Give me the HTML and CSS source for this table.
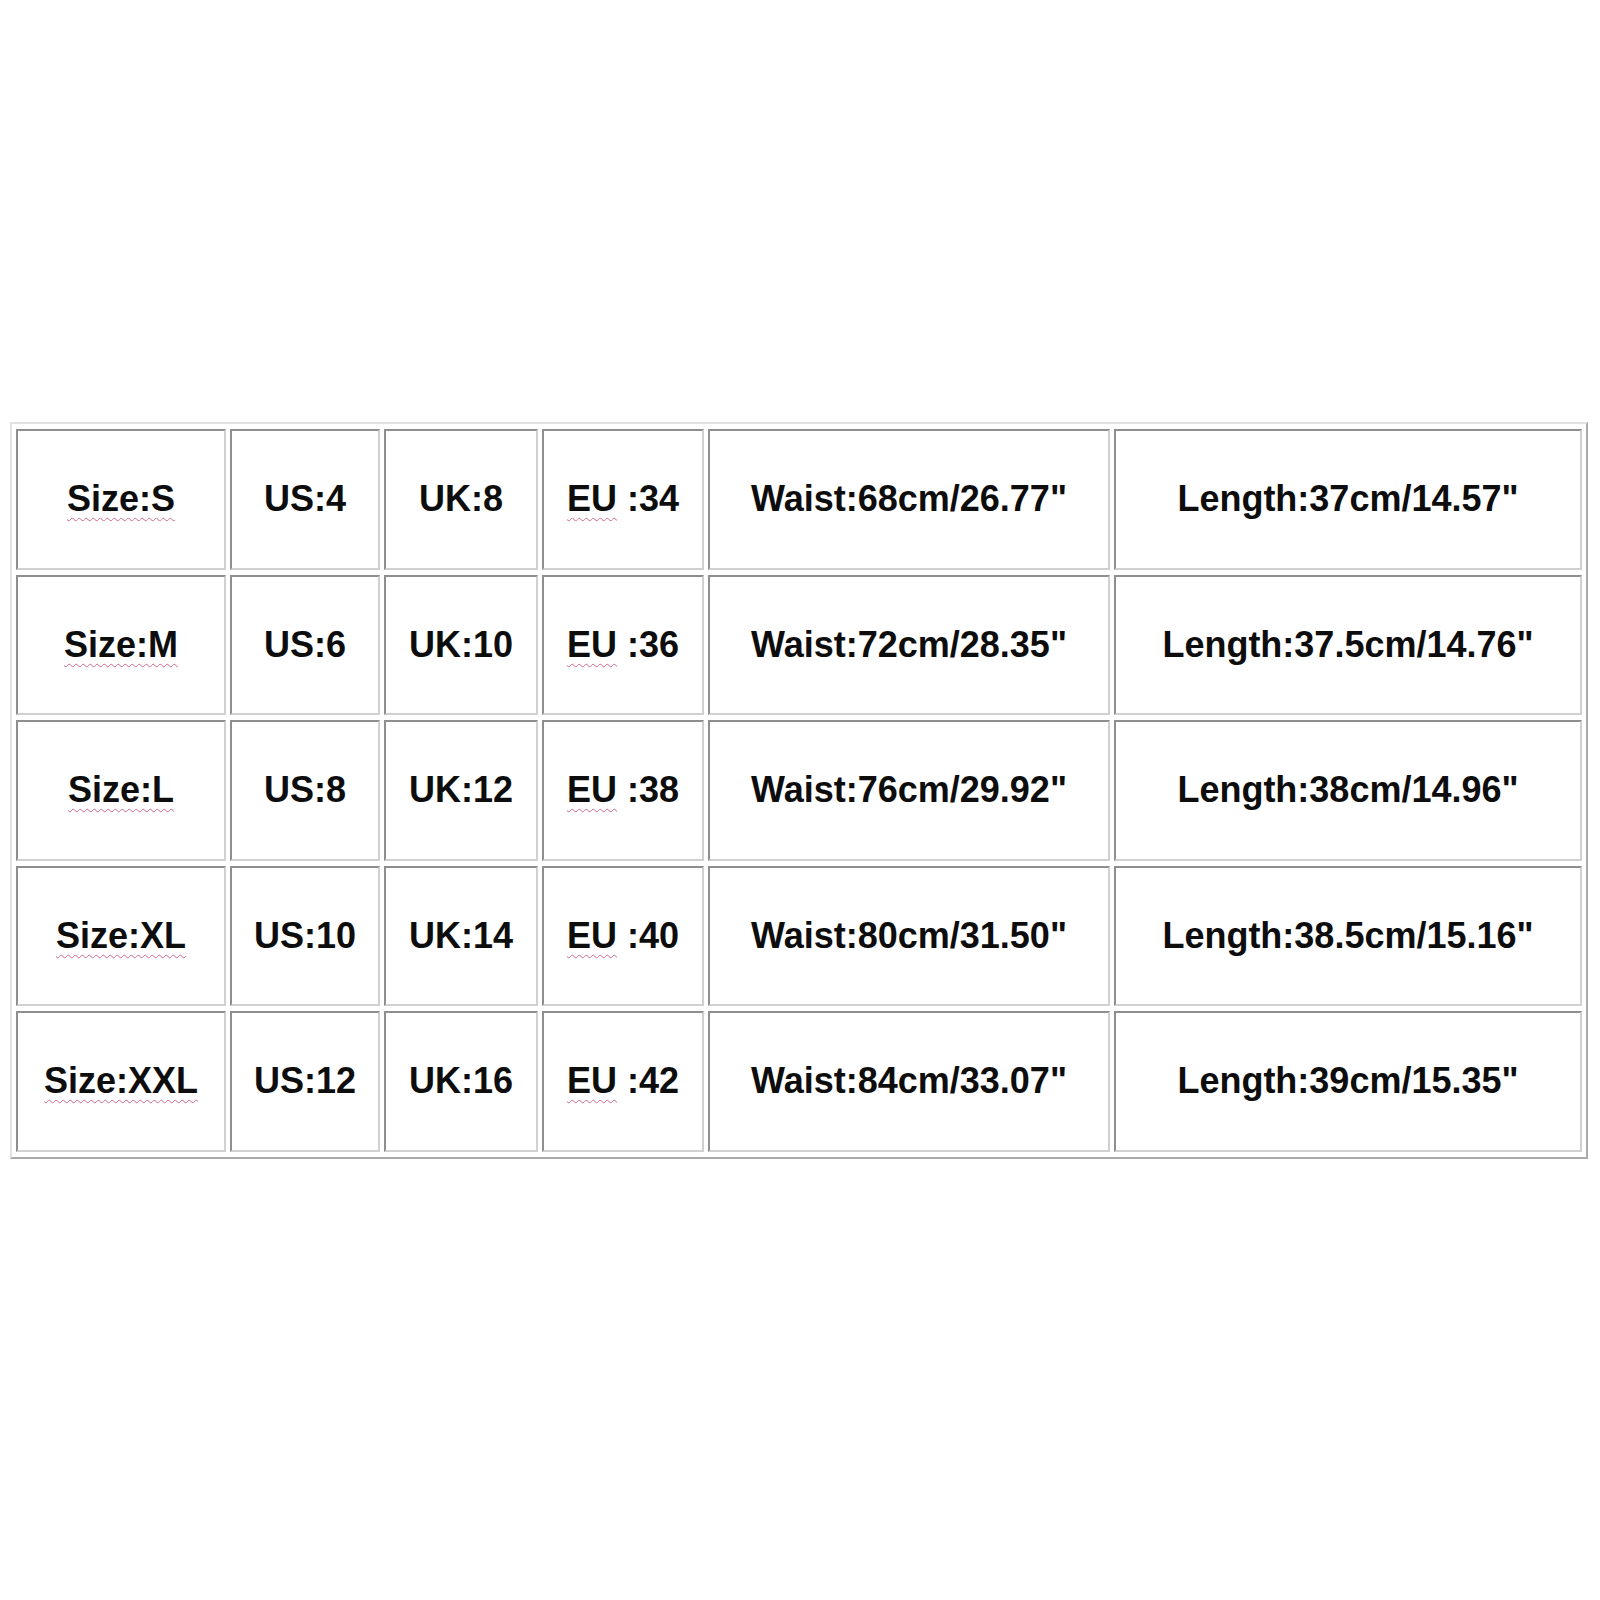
FILE: index.html
```html
<!DOCTYPE html>
<html>
<head>
<meta charset="utf-8">
<link rel="stylesheet" href="styles.css">
</head>
<body>
<table class="sizes">
  <colgroup>
    <col class="c1"><col class="c2"><col class="c3"><col class="c4"><col class="c5"><col class="c6">
  </colgroup>
  <tbody>
    <tr>
      <td><span class="spell">Size:S</span></td>
      <td>US:4</td>
      <td>UK:8</td>
      <td><span class="spell">EU</span> :34</td>
      <td>Waist:68cm/26.77"</td>
      <td>Length:37cm/14.57"</td>
    </tr>
    <tr>
      <td><span class="spell">Size:M</span></td>
      <td>US:6</td>
      <td>UK:10</td>
      <td><span class="spell">EU</span> :36</td>
      <td>Waist:72cm/28.35"</td>
      <td>Length:37.5cm/14.76"</td>
    </tr>
    <tr>
      <td><span class="spell">Size:L</span></td>
      <td>US:8</td>
      <td>UK:12</td>
      <td><span class="spell">EU</span> :38</td>
      <td>Waist:76cm/29.92"</td>
      <td>Length:38cm/14.96"</td>
    </tr>
    <tr>
      <td><span class="spell">Size:XL</span></td>
      <td>US:10</td>
      <td>UK:14</td>
      <td><span class="spell">EU</span> :40</td>
      <td>Waist:80cm/31.50"</td>
      <td>Length:38.5cm/15.16"</td>
    </tr>
    <tr>
      <td><span class="spell">Size:XXL</span></td>
      <td>US:12</td>
      <td>UK:16</td>
      <td><span class="spell">EU</span> :42</td>
      <td>Waist:84cm/33.07"</td>
      <td>Length:39cm/15.35"</td>
    </tr>
  </tbody>
</table>
</body>
</html>
```
FILE: styles.css
```css
html, body {
  margin: 0;
  padding: 0;
  background: #ffffff;
}

body {
  padding-top: 422px;
  padding-left: 10px;
  font-family: "Liberation Sans", Arial, sans-serif;
}

.sizes {
  table-layout: fixed;
  width: 1578px;
  border-collapse: separate;
  border-spacing: 4px 5px;
  border-style: solid;
  border-width: 2px;
  border-color: #e2e2e2 #a9a9a9 #a9a9a9 #e2e2e2;
}

.c1 { width: 210px; }
.c2 { width: 150px; }
.c3 { width: 154px; }
.c4 { width: 162px; }
.c5 { width: 402px; }
.c6 { width: 468px; }

.sizes td {
  height: 140.5px;
  box-sizing: border-box;
  padding: 0;
  border-style: solid;
  border-width: 2px;
  border-color: #8e8e8e #d0d0d0 #d0d0d0 #8e8e8e;
  text-align: center;
  vertical-align: middle;
  font-size: 36px;
  font-weight: bold;
  color: #0d0d0d;
  white-space: nowrap;
}

.spell {
  text-decoration-line: underline;
  text-decoration-style: wavy;
  text-decoration-color: #d46a88;
  text-decoration-thickness: 1px;
  text-underline-offset: 6px;
}
```
